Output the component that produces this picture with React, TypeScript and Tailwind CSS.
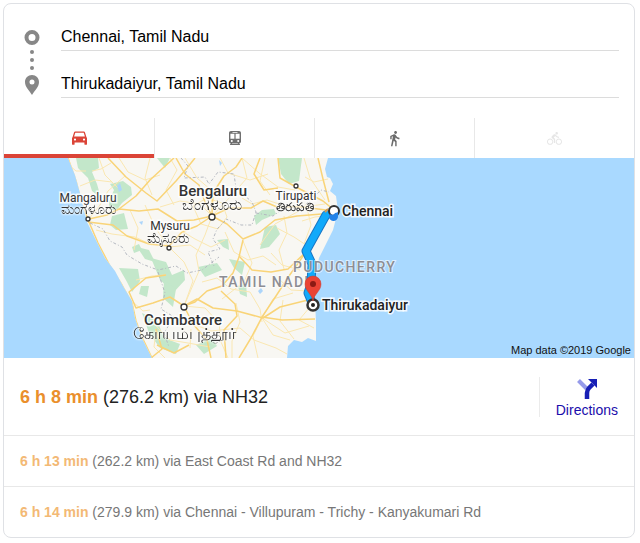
import React from "react";
import { MdDirectionsBike, MdDirectionsWalk } from "react-icons/md";

const CAR = (
  <svg viewBox="0 0 15 14" className="h-[14px] w-[15px]" fill="currentColor" aria-hidden="true">
    <path
      fillRule="evenodd"
      d="M3.2 0.5h8.6c.6 0 1 .3 1.2.9L14.4 6c.4.5.6 1 .6 1.6v5.3c0 .6-.3.9-.9.9h-.8c-.6 0-.9-.3-.9-.9V11.600H2.600v1.300c0 .6-.3.9-.9.9H.9c-.6 0-.9-.3-.9-.9V7.600c0-.6.2-1.100.6-1.600L2 1.400c.2-.6.600-.9 1.200-.9zM3.300 1.800 2.100 5.600h10.800l-1.200-3.800zM3 7.500a1.100 1.100 0 1 0 0 2.200 1.100 1.100 0 0 0 0-2.200zm9 0a1.100 1.100 0 1 0 0 2.200 1.100 1.100 0 0 0 0-2.200z"
    />
  </svg>
);

const TRAIN = (
  <svg viewBox="0 0 12 15" className="h-[15px] w-3" fill="currentColor" aria-hidden="true">
    <path
      fillRule="evenodd"
      d="M2 0h8c1.200 0 2 .8 2 2v8.500c0 1-.8 1.800-1.800 1.800L11 13.500v.5H1v-.5l.8-1.200C.8 12.300 0 11.500 0 10.500V2C0 .8.8 0 2 0zM3.500 1v.8h5V1zM1.400 2.800v5h4v-5zM6.600 2.800v5h4v-5zM2.800 9a1 1 0 1 0 0 2 1 1 0 0 0 0-2zm6.400 0a1 1 0 1 0 0 2 1 1 0 0 0 0-2zM3.300 12.400l-.4.700h6.200l-.4-.700z"
    />
  </svg>
);

const TABS = [
  { name: "Driving", icon: CAR, style: "border-b-4 border-[#db4437] pt-1 text-[#db4437]" },
  { name: "Transit", icon: TRAIN, style: "border-l border-[#e8e8e8] text-[#707070]" },
  { name: "Walking", icon: <MdDirectionsWalk size={17} />, style: "border-l border-[#e8e8e8] text-[#6b6b6b]" },
  { name: "Cycling", icon: <MdDirectionsBike size={15} />, style: "border-l border-[#e8e8e8] text-[#e6e6e6]" },
];

const FORESTS = [
  "M76 158 L98 158 L99 168 L92 172 L97 184 L101 198 L92 191 L88 178 L78 168Z",
  "M109 201 L114 190 L110 184 L123 181 L131 187 L132 195 L122 203 L116 211 L109 209Z",
  "M112 216 L124 213 L128 229 L116 230 L110 225Z",
  "M119 268 L138 269 L140 281 L132 292 L127 282Z",
  "M137 247 L149 250 L155 262 L145 259Z",
  "M132 247 L139 244 L142 250 L134 253Z",
  "M141 286 L149 286 L147 297 L139 294Z",
  "M142 313 L157 320 L164 338 L180 344 L176 354 L160 348 L149 333Z",
  "M151 258 L166 262 L172 275 L184 270 L185 280 L174 292 L160 280Z",
  "M278 158 L302 158 L299 181 L289 184 L281 174Z",
  "M265 227 L276 225 L280 234 L269 247 L260 249Z",
  "M254 216 L262 210 L274 209 L276 214 L262 220 L256 225Z",
  "M229 259 L245 262 L242 275 L234 268Z",
  "M198 267 L217 263 L222 270 L205 277Z",
  "M196 345 L212 338 L217 346 L204 354Z",
  "M217 240 L228 239 L229 250 L223 247Z",
  "M238 286 L246 283 L247 297 L240 294Z",
  "M164 280 L176 289 L173 307 L163 298Z",
  "M157 158 L170 158 L165 168Z",
];

const MINOR_ROADS = [
  "M80 186 L95 180 L112 182 M88 220 L100 205 L108 191 L125 176",
  "M99 158 L105 175 L118 188 M119 158 L128 172 L145 180 L160 175",
  "M96 230 L112 234 L135 237 L152 245 M150 158 L145 178 L152 195",
  "M130 210 L138 228 L134 250 M145 205 L155 227 L168 246",
  "M170 158 L177 170 L166 190 L174 205 M185 158 L197 178 L211 190 L212 216",
  "M212 216 L231 196 L247 178 L242 158 M212 216 L200 204 L180 201 L160 207",
  "M220 158 L228 173 L250 180 L268 174 M265 158 L260 181 L270 195",
  "M242 198 L252 204 L267 200 L285 206 L303 207 L325 204",
  "M169 247 L184 262 L193 281 L184 306 M169 247 L190 245 L205 255",
  "M212 216 L205 235 L196 255 L199 271 L184 306 M243 241 L252 263 L244 282 L222 299",
  "M242 158 L259 173 L278 187 L295 190 M304 158 L310 178 L325 200",
  "M225 232 L234 252 L248 260 L263 256 L276 265 M202 282 L217 278 L231 289 L250 292",
  "M250 292 L260 309 L262 322 M236 303 L240 322 L232 341 L232 358",
  "M184 306 L205 308 L219 323 L221 342 L228 358 M262 318 L253 336 L258 358",
  "M262 318 L273 335 L290 340 M262 318 L285 333 L309 326 M262 318 L273 299 L293 293",
  "M240 328 L254 340 L276 348 L287 354 M283 300 L280 321 L294 339",
  "M280 280 L291 290 L308 291 M271 253 L282 265 L300 270 M277 228 L294 237 L306 245",
  "M284 216 L287 233 L279 250 L284 269 M306 204 L311 225 L304 244",
  "M260 245 L275 224 L299 211 M180 230 L195 239 L211 247 L225 240",
  "M136 280 L152 276 L166 275 M133 302 L143 311 L150 310 M156 326 L170 340 L188 343 L210 347",
  "M156 329 L154 347 L165 358 M191 329 L190 348 M188 322 L211 331 L240 328",
  "M310 307 L299 320 L314 328 M305 177 L314 182 L328 179 M302 221 L315 217 L332 215",
  "M92 171 L101 169 L111 163 M61 158 L76 171 L86 171",
  "M193 206 L201 224 L218 229 L227 217 L222 203 L207 198Z",
];

const MAJOR_ROADS = [
  "M68 158 L76 181 L81 201 L89 222 L98 243 L110 266 L122 285 L132 303 L136 321 L142 337 L152 358",
  "M89 219 L107 215 L119 209 L139 211 L158 209 L177 221 L194 220 L212 216",
  "M88 222 L113 225 L127 236 L149 244 L169 246 L182 232 L197 226 L212 216",
  "M108 158 L126 177 L146 193 L157 201 L176 181 L187 168 L195 158",
  "M119 209 L136 196 L150 180 L163 168 L174 158",
  "M212 216 L205 202 L199 185 L185 174 L176 158",
  "M212 216 L213 193 L224 176 L236 167 L242 158",
  "M212 216 L229 208 L251 208 L263 201 L277 207 L302 207 L334 211",
  "M212 216 L227 224 L243 239 L260 232 L275 220 L297 216 L334 213",
  "M243 240 L239 257 L233 273 L222 286 L207 291 L195 302 L184 306",
  "M184 306 L197 299 L213 308 L237 311 L263 318 L280 307 L308 300 L313 305",
  "M239 256 L252 270 L271 272 L288 269 L306 252 L333 211",
  "M306 252 L289 276 L276 296 L262 317 L251 338 L239 358",
  "M184 306 L170 297 L153 303 L136 308 L129 292 L146 278 L166 275",
  "M184 306 L193 324 L207 340 L211 358",
  "M262 317 L282 320 L315 319 M313 305 L316 283 L307 258",
  "M278 158 L280 178 L296 187 L323 201 L334 210 M318 158 L323 179 L329 202",
  "M260 158 L254 174 L264 190 L278 188 M221 291 L235 304 L237 316 L224 330 L226 358",
  "M156 329 L162 349 L151 358 M157 345 L174 353 L189 345",
];

const BORDERS = [
  "M90 223 L103 229 L110 241 L122 247 L127 255 L142 264 L158 270 L176 266 L187 273 L202 270 L219 257",
  "M181 158 L188 166 L184 178 L205 177 L209 184 L218 172 L234 174 L236 188 L252 202 L256 212 L252 225 L241 225 L226 219",
  "M225 221 L217 229 L213 239 L220 249 L208 252 L214 266",
  "M256 213 L273 216 L287 206 L300 210 L321 190 L329 192",
  "M158 272 L165 293 L161 309 L174 317 L164 333 L169 347",
];

const CITIES = [
  { x: 88, y: 219, r: 2 },
  { x: 169, y: 248, r: 2 },
  { x: 296, y: 186, r: 2 },
  { x: 212, y: 217, r: 3 },
  { x: 184, y: 307, r: 3 },
];

const HALO = "stroke-white/80 stroke-[3px] [paint-order:stroke]";
const GLOW = "[filter:drop-shadow(0_0_1px_white)_drop-shadow(0_0_1px_white)]";

const LATIN_LABELS = [
  { x: 88, y: 202, text: "Mangaluru", style: "text-[12px]" },
  { x: 213, y: 196, text: "Bengaluru", style: "text-[15px] font-medium" },
  { x: 296, y: 200, text: "Tirupati", style: "text-[12px]" },
  { x: 170, y: 230, text: "Mysuru", style: "text-[12px]" },
  { x: 183, y: 325, text: "Coimbatore", style: "text-[15px] font-medium" },
];

const LOCAL_LABELS = [
  { x: 88, y: 214, text: "ಮಂಗಳೂರು", style: "text-[14px]" },
  { x: 212, y: 210, text: "ಬೆಂಗಳೂರು", style: "text-[16px]" },
  { x: 295, y: 211, text: "తిరుపతి", style: "text-[12px]" },
  { x: 168, y: 243, text: "ಮೈಸೂರು", style: "text-[14px]" },
  { x: 184, y: 339, text: "கோயம்புத்தூர்", style: "text-[16px]" },
];

const REGION = "fill-[#8d8d93] stroke-white/60 stroke-2 text-[14px] font-medium tracking-widest [paint-order:stroke]";

function RouteMap() {
  return (
    <svg
      viewBox="4 158 630 200"
      preserveAspectRatio="xMidYMid slice"
      className="block h-[200px] w-full bg-[#a9d9ff] font-[Roboto,'Noto_Sans',sans-serif]"
      role="img"
      aria-label="Map of the route from Chennai to Thirukadaiyur"
    >
      <defs>
        <clipPath id="land">
          <path d="M68 158 L75 175 L80 193 L87 222 L97 242 L105 258 L115 271 L123 286 L132 301 L135 318 L142 338 L152 358 L287 358 L288 346 L294 340 L302 342 L308 338 L316 341 L316 322 L315 300 L316 272 L319 258 L325 246 L333 230 L338 211 L336 196 L330 191 L333 184 L330 178 L327 177 L325 169 L328 158Z" />
        </clipPath>
      </defs>
      <g clipPath="url(#land)" fill="none" strokeLinejoin="round">
        <path d="M4 158h630v200H4z" fill="#f8f7f3" />
        {FORESTS.map((d) => <path key={d} d={d} fill="#c3e7ca" />)}
        {MINOR_ROADS.map((d) => <path key={d} d={d} stroke="#fae7b1" strokeWidth="1" />)}
        {MAJOR_ROADS.map((d) => <path key={d} d={d} stroke="#f9d478" strokeWidth="1.500" />)}
        {BORDERS.map((d) => <path key={d} d={d} stroke="#b4b8c0" strokeWidth="1" strokeDasharray="3 2 1 2" />)}
        <path d="M117 186l3-3 2 7-3 2zM139 222l4-1-1 4zM258 291l3-3 2 3-3 3zM219 160l3 3-2 3z" fill="#acd5fa" />
      </g>
      {CITIES.map((c) => (
        <circle key={c.x} cx={c.x} cy={c.y} r={c.r} fill="#fff" stroke="#333" strokeWidth="1.300" />
      ))}
      <g textAnchor="middle" fill="#333">
        {LATIN_LABELS.map((l) => (
          <text key={l.text} x={l.x} y={l.y} className={`${HALO} ${l.style}`}>{l.text}</text>
        ))}
        {LOCAL_LABELS.map((l) => (
          <text key={l.text} x={l.x} y={l.y} className={`${GLOW} ${l.style}`}>{l.text}</text>
        ))}
      </g>
      <text x="219" y="287" className={REGION}>TAMIL NADU</text>
      <path d="M334 211 L326 215 L306 251 L312 264 L311 284 L308 293 L313 305" fill="none" stroke="#1976c5" strokeWidth="9" strokeLinejoin="round" />
      <path d="M334 211 L326 215 L306 251 L312 264 L311 284 L308 293 L313 305" fill="none" stroke="#11a9fa" strokeWidth="7" strokeLinejoin="round" />
      <text x="293" y="272" className={REGION}>PUDUCHERRY</text>
      <circle cx="334" cy="211" r="5" fill="#fff" stroke="#333" strokeWidth="2" />
      <path d="M325 212l3-3" stroke="#d99a4e" strokeWidth="2" />
      <path d="M329 215c2-2 3 1 5-1s3-1 4-2v4a4 4 0 0 1-9 1z" fill="#2382e8" />
      <circle cx="313" cy="305" r="5.500" fill="#fff" stroke="#333" strokeWidth="2.500" />
      <circle cx="313" cy="305" r="2" fill="#222" />
      <path d="M313 301c-1-7-8-10-8-17a8 8 0 0 1 16 0c0 7-7 10-8 17z" fill="#ea4335" stroke="#c93b30" strokeWidth=".5" />
      <circle cx="313" cy="284" r="3" fill="#8b1a14" />
      <g fill="#222" className="stroke-white/80 stroke-[3px] text-[14px] font-medium [paint-order:stroke]">
        <text x="342" y="216">Chennai</text>
        <text x="322" y="310">Thirukadaiyur</text>
      </g>
      <text x="631" y="354" textAnchor="end" className="fill-[#111] font-['Liberation_Sans',Arial,sans-serif] text-[11px]">
        Map data ©2019 Google
      </text>
    </svg>
  );
}

function PlaceField({ label, value }: { label: string; value: string }) {
  return (
    <input
      aria-label={label}
      defaultValue={value}
      className="h-7 w-full border-b border-[#dcdcdc] bg-transparent text-base text-black outline-none"
    />
  );
}

export default function App() {
  return (
    <main className="bg-white pt-[3px] pr-[5px] pb-[5px] pl-[3px] font-['Liberation_Sans',Arial,sans-serif]">
      <div className="overflow-hidden rounded-lg border border-[#dfe1e5]">
        <form className="flex pt-[19px] pr-[15px] pb-5 pl-5">
          <svg viewBox="0 0 16 66" className="mt-[7px] mr-[21px] h-[66px] w-4 shrink-0" fill="#878787" aria-hidden="true">
            <circle cx="8" cy="7.500" r="5.500" fill="none" stroke="#878787" strokeWidth="4" />
            <circle cx="8" cy="22" r="2" />
            <circle cx="8" cy="30" r="2" />
            <circle cx="8" cy="38" r="2" />
            <path fillRule="evenodd" d="M8 45c4 0 7 3 7 7 0 5-4 8-7 13-3-5-7-8-7-13 0-4 3-7 7-7zm0 4.500a2.500 2.500 0 1 0 0 5 2.500 2.500 0 0 0 0-5z" />
          </svg>
          <div className="flex grow flex-col gap-[19px]">
            <PlaceField label="From" value="Chennai, Tamil Nadu" />
            <PlaceField label="To" value="Thirukadaiyur, Tamil Nadu" />
          </div>
        </form>

        <div role="tablist" aria-label="Travel mode" className="grid h-10 grid-cols-[15fr_16fr_16fr_16fr]">
          {TABS.map((tab, i) => (
            <button
              key={tab.name}
              type="button"
              role="tab"
              aria-selected={i === 0}
              aria-label={tab.name}
              className={`flex items-center justify-center ${tab.style}`}
            >
              {tab.icon}
            </button>
          ))}
        </div>

        <RouteMap />

        <div className="flex h-[77px] items-center justify-between px-4 text-lg text-[#222]">
          <p><b className="text-[#ea8f2c]">6 h 8 min</b> (276.2 km) via NH32</p>
          <a href="#directions" className="flex h-10 flex-col items-center gap-px border-l border-[#ebebeb] pt-0.5 pl-4 text-sm text-[#1a0dab]">
            <svg viewBox="0 0 20 20" className="h-5 w-5 shrink-0" aria-hidden="true">
              <path d="M1.500 1.500l8 8" stroke="#969bea" strokeWidth="4" />
              <path d="M10 20v-6c0-2 1-4 2-5l4-4" fill="none" stroke="#171fb5" strokeWidth="4.500" />
              <path d="M11 0h9v9l-3-3-3-3z" fill="#171fb5" />
            </svg>
            <span>Directions</span>
          </a>
        </div>
        <p className="flex h-[51px] items-center border-t border-[#e8e8e8] px-4 text-sm text-[#777]">
          <span><b className="text-[#f3b975]">6 h 13 min</b> (262.2 km) via East Coast Rd and NH32</span>
        </p>
        <p className="flex h-[51px] items-center border-t border-[#e8e8e8] px-4 text-sm text-[#777]">
          <span><b className="text-[#f3b975]">6 h 14 min</b> (279.9 km) via Chennai - Villupuram - Trichy - Kanyakumari Rd</span>
        </p>
      </div>
    </main>
  );
}
